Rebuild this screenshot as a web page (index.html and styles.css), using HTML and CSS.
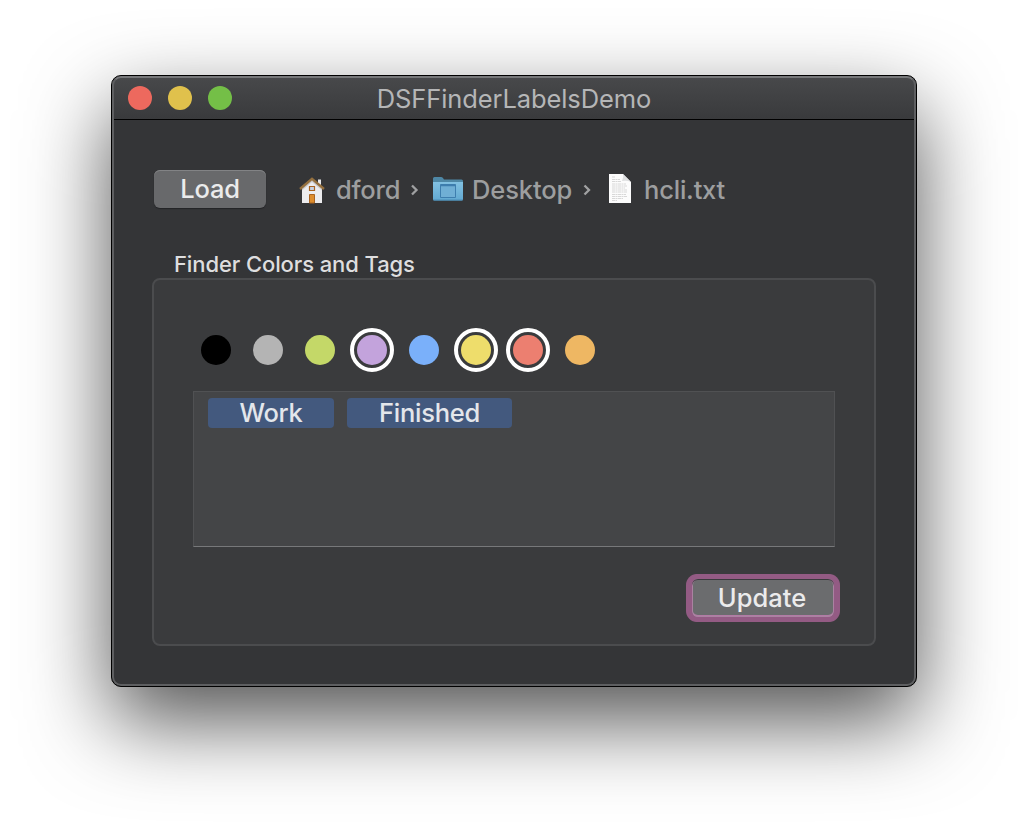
FILE: index.html
```html
<!DOCTYPE html>
<html lang="en">
<head>
<meta charset="utf-8">
<title>DSFFinderLabelsDemo</title>
<link rel="stylesheet" href="styles.css">
</head>
<body>
<main class="window">
  <header class="titlebar">
    <div class="lights"><i class="light close"></i><i class="light minimize"></i><i class="light zoom"></i></div>
    <h1 class="title">DSFFinderLabelsDemo</h1>
  </header>
  <section class="content">
    <div class="toolbar">
      <button class="button load">Load</button>
      <nav class="path">
        <svg class="home" width="28" height="30" viewBox="0 0 28 30">
          <path d="M20 5.500h3v7h-3z" fill="#e9eaec"/>
          <path d="M4 14 14 5l10 9V29H4z" fill="#ececee"/>
          <path d="M4 14.500 14 6l10 8.500v2L14 8 4 16.500z" fill="#c9cacd"/>
          <path d="m2 15 12-10.200L26 15" fill="none" stroke="#94703f" stroke-width="2.400"/>
          <path d="M11.500 12.500h5v4h-5z" fill="#c4d0e2" stroke="#a96422" stroke-width="1.200"/>
          <path d="M11.500 20.500h5V29h-5z" fill="#dd8d2d" stroke="#a96422"/>
        </svg>
        <span class="crumb dford">dford</span>
        <svg class="chevron" width="10" height="14" viewBox="0 0 10 14"><path d="m3 2.500 4.500 4.500-4.500 4.500" fill="none" stroke="#a0a1a2" stroke-width="2.300"/></svg>
        <svg class="folder" width="32" height="26" viewBox="0 0 32 26">
          <defs><linearGradient id="folderBlue" x2="0" y2="1"><stop stop-color="#82c1e2"/><stop offset="1" stop-color="#62a9d1"/></linearGradient></defs>
          <path d="M1 2.500Q1 1 2.500 1H9q1.200 0 2 1l1 1.500h17.500Q31 3.500 31 5v4H1z" fill="#4e87a5"/>
          <path d="M1 6h30v17q0 1.500-1.500 1.500h-27Q1 24.500 1 23z" fill="url(#folderBlue)"/>
          <path d="M1.500 24h29" stroke="#4b8db6"/>
          <path d="M8.500 8.500h15v13h-15z" fill="#70afd5" stroke="#3e7eae"/>
          <path d="M8.500 9.500h15" stroke="#3e7eae" stroke-width="1.500"/>
        </svg>
        <span class="crumb desktop">Desktop</span>
        <svg class="chevron" width="10" height="14" viewBox="0 0 10 14"><path d="m2.500 2.500 4.500 4.500-4.500 4.500" fill="none" stroke="#a0a1a2" stroke-width="2.300"/></svg>
        <svg class="document" width="24" height="31" viewBox="0 0 24 31">
          <path d="M1 0h14l8 8v21H1z" fill="#fcfcfc"/>
          <path d="M15 0q1 3-1 7 5-1 9 1z" fill="#dedfe0"/>
          <path d="M4 3h3M4 5.500h8M4 7.500h9M4 10h14M4 12h15M4 14h13M4 16h15M4 18h15M4 20.500h14M4 22.500h15M4 24.500h11M4 26.500h5" stroke="#c8c8c8" stroke-width=".7" stroke-dasharray="3 .5 2 .5"/>
        </svg>
        <span class="crumb file">hcli.txt</span>
      </nav>
    </div>
    <h2 class="group-title">Finder Colors and Tags</h2>
    <div class="group">
      <div class="colors">
        <i class="dot black"></i><i class="dot gray"></i><i class="dot green"></i><i class="dot purple selected"></i><i class="dot blue"></i><i class="dot yellow selected"></i><i class="dot red selected"></i><i class="dot orange"></i>
      </div>
      <div class="tokens"><span class="token work">Work</span><span class="token finished">Finished</span></div>
      <button class="button update">Update</button>
    </div>
  </section>
</main>
</body>
</html>
```
FILE: styles.css
```css
* { box-sizing: border-box; }
body {
  margin: 0;
  height: 834px;
  padding: 75px 111px;
  overflow: hidden;
  background: #fff;
  font-family: Inter, "Liberation Sans", sans-serif;
  font-size: 25px;
  font-weight: 450;
}
.window {
  position: relative;
  width: 806px;
  height: 612px;
  border: 1px solid #000;
  border-radius: 10px;
  background: #343537;
  box-shadow: 0 34px 84px rgba(0,0,0,.68);
  overflow: hidden;
}
/* Light rim lying over the window edge */
.window::after {
  content: "";
  position: absolute;
  inset: 0;
  border: 2px solid #5e5f61;
  border-top-color: #77787a;
  border-radius: 9px;
  pointer-events: none;
}
.titlebar {
  display: grid;
  grid-template-columns: 200px 1fr 200px;
  align-items: center;
  height: 44px;
  border-bottom: 1px solid #000;
  background: linear-gradient(#48494b, #393a3c);
}
.lights { display: flex; gap: 16px; padding-left: 16px; }
.light { width: 24px; height: 24px; border-radius: 50%; }
.close { background: #ed695e; }
.minimize { background: #e0c14c; }
.zoom { background: #74bf47; }
.title {
  margin: 2px 0 0;
  color: #b5b6b7;
  font-size: 25.5px;
  font-weight: 430;
  letter-spacing: -.1px;
  text-align: center;
  white-space: nowrap;
}
.content { padding: 50px 40px 0; }
.toolbar { display: flex; align-items: center; height: 38px; padding-left: 2px; }
.button {
  flex: none;
  border: 0;
  border-radius: 6px;
  padding: 0;
  background: #68696b;
  color: #ebebec;
  font: 450 25.5px/36px Inter, "Liberation Sans", sans-serif;
}
.load { width: 112px; height: 38px; letter-spacing: -.2px; box-shadow: inset 0 1px #828385, 0 1px 1px #232426; }
.path { display: flex; align-items: center; height: 38px; color: #9d9e9f; }
.path svg { flex: none; }
.home { margin: 0 10px 0 32px; }
.crumb { flex: none; margin-top: 2px; font-size: 25.5px; line-height: 38px; white-space: nowrap; letter-spacing: -.2px; }
.dford { width: 73px; }
.chevron { margin: 1px 13px 0 0; }
.folder { margin-right: 8px; }
.desktop { width: 110px; letter-spacing: -.1px; }
.document { margin: 0 12px 0 3px; }
.group-title {
  height: 28px;
  margin: 42px 0 0;
  padding-left: 22px;
  color: #dededf;
  font-size: 22px;
  font-weight: 450;
  line-height: 28px;
  letter-spacing: -.1px;
}
.group {
  display: flex;
  flex-direction: column;
  width: 724px;
  height: 368px;
  padding: 55px 39px 0;
  border: 2px solid #4b4c4e;
  border-radius: 8px;
  background: #3a3b3d;
}
.colors { display: flex; flex: none; height: 30px; gap: 22px; padding-left: 8px; margin-bottom: 26px; }
.dot { width: 30px; height: 30px; border-radius: 50%; }
.selected { outline: 4px solid #fff; outline-offset: 3px; }
.black { background: #000; }
.gray { background: #b4b4b4; }
.green { background: #c4d868; }
.purple { background: #c3a3dc; }
.blue { background: #7ab0fa; }
.yellow { background: #eedd6b; }
.red { background: #ec7f70; }
.orange { background: #eeb763; }
.tokens {
  display: flex;
  flex: none;
  gap: 13px;
  width: 642px;
  height: 156px;
  padding: 6px 14px;
  border: 1px solid #505153;
  border-bottom-color: #77787a;
  background: #444547;
}
.token { height: 30px; border-radius: 4px; background: #43597e; color: #e3e6eb; font-size: 25.5px; line-height: 30px; text-align: center; letter-spacing: -.25px; }
.work { width: 126px; }
.finished { width: 165px; }
.update {
  align-self: flex-end;
  width: 142px;
  height: 38px;
  margin: 32px 1px 0 0;
  padding-right: 2px;
  background: #6b6c6e;
  box-shadow: inset 0 1px #3a3a3d, inset 0 0 0 1px #aa82a1, inset 0 -2px #b27ba6, 1px 0 0 5px #935b84, -1px 0 0 5px #935b84;
}
```
